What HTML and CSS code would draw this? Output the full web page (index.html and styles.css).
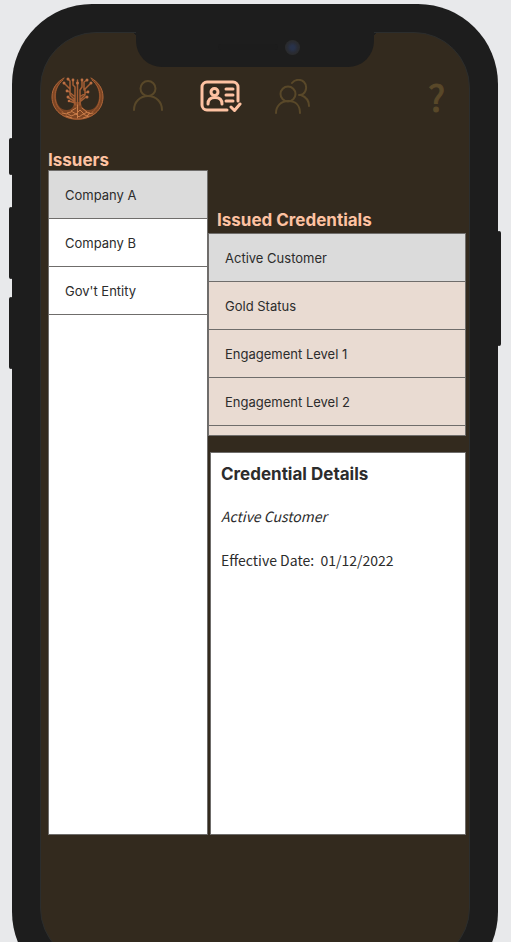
FILE: index.html
```html
<!DOCTYPE html>
<html lang="en">
<head>
<meta charset="utf-8">
<meta name="viewport" content="width=device-width, initial-scale=1">
<title>Credential Wallet</title>
<link rel="stylesheet" href="styles.css">
</head>
<body>
<div class="stage">
  <div class="phone">
    <span class="key key-mute"></span>
    <span class="key key-up"></span>
    <span class="key key-down"></span>
    <span class="key key-power"></span>
    <div class="notch"><span class="speaker"></span><span class="camera"></span></div>
    <div class="screen">
      <nav class="toolbar" aria-label="Main">
        <button class="tool tool-logo" type="button" aria-label="Home">
          <svg width="60" height="50" viewBox="0 0 60 50" fill="none" stroke-linecap="round" stroke-linejoin="round">
            <path d="M17 5C9 8 4 15 4 24c0 13 11 23 25.500 23S55 37 55 24c0-9-5-16-13-19 6 5 9 11 9 18 0 8-4 14-11 14-4 0-7-3-7-8h-7c0 5-3 8-7 8-7 0-11-6-11-14 0-7 3-13 9-18z" fill="#7d4523"/>
            <path d="M16 5C9 9 4 15 4 24c0 13 11 22 25.500 22S55 37 55 24c0-9-5-15-12-19" stroke="#b1673a" stroke-width="1"/>
            <path d="M15 7c-5 4-8 10-8 16 0 7 3 13 8 16M44 7c5 4 8 10 8 16 0 7-3 13-8 16" stroke="#a35d33" stroke-width="1"/>
            <path d="M29.500 33V7M27 32V14l-2-2V8M32 32V17l2-3V8M27 27l-5-5v-6l-5-5M22 19V8l-2-2M32 27l5-5v-6l5-5M36 17V9l3-2M26 28l-5-3M33 28l5-4M26 23l-6-5M33 23l6-4M27 30l-6-2" stroke="#a65f35" stroke-width="1.500"/>
            <g fill="#bd7044"><circle cx="16" cy="10" r="1.500"/><circle cx="20" cy="6" r="1.500"/><circle cx="25" cy="7" r="1.400"/><circle cx="29.500" cy="10" r="1.500"/><circle cx="34" cy="7" r="1.400"/><circle cx="39" cy="7" r="1.500"/><circle cx="43" cy="10" r="1.500"/><circle cx="19" cy="18" r="1.400"/><circle cx="40" cy="19" r="1.400"/><circle cx="20" cy="24" r="1.500"/><circle cx="39" cy="24" r="1.500"/><circle cx="21" cy="28" r="1.300"/></g>
            <path d="M29.500 32v13M28 35l-5 3 5 3 4-4 4 4 3-2-5-4M23 39l-4 1 4 3 5-2 3 3 4-3 4 2 3-3-4-1M14 40l5 1M45 40l-5 1M18 43l6 2M41 43l-6 2" stroke="#c97d49" stroke-width="1"/>
          </svg>
        </button>
        <button class="tool tool-profile" type="button" aria-label="Profile">
          <svg width="32" height="34" viewBox="0 0 32 34" fill="none" stroke="#594829" stroke-width="2" stroke-linecap="round"><circle cx="16" cy="9.500" r="7.500"/><path d="M2 31c0-8 6-14 14-14s14 6 14 14"/></svg>
        </button>
        <button class="tool tool-credentials" type="button" aria-label="Credentials" aria-current="page">
          <svg width="42" height="34" viewBox="0 0 42 34" fill="none" stroke="#fec2a2" stroke-width="3" stroke-linecap="round" stroke-linejoin="round"><path d="M27 30H7a5 5 0 0 1-5-5V7a5 5 0 0 1 5-5h26a5 5 0 0 1 5 5v14"/><circle cx="14.500" cy="12" r="3.500"/><path d="M8 24c0-4.500 3-6.500 7-6.500s7 2 7 6.500M26 9h7M26 15h7M26 21h7"/><path d="m31 27 3.500 3.500L40 24"/></svg>
        </button>
        <button class="tool tool-contacts" type="button" aria-label="Contacts">
          <svg width="36" height="36" viewBox="0 0 36 36" fill="none" stroke="#594829" stroke-width="2" stroke-linecap="round"><circle cx="13" cy="15" r="7.500"/><path d="M1 34c0-7 5-12 12.500-12S25 27 25 34M17 4c3-4 9-4 12-1s3 9-1 12c-1 1-3 1-4 1M26 16c5 2 8 6 8 11"/></svg>
        </button>
        <button class="tool tool-help" type="button" aria-label="Help">?</button>
      </nav>
      <main class="board">
        <section class="issuers">
          <h2 class="title">Issuers</h2>
          <ul class="list list-issuers">
            <li><button class="row row-active" type="button">Company A</button></li>
            <li><button class="row" type="button">Company B</button></li>
            <li><button class="row" type="button">Gov't Entity</button></li>
          </ul>
        </section>
        <div class="side">
          <section class="credentials">
            <h2 class="title title-inset">Issued Credentials</h2>
            <ul class="list list-credentials">
              <li><button class="row row-active" type="button">Active Customer</button></li>
              <li><button class="row" type="button">Gold Status</button></li>
              <li><button class="row" type="button">Engagement Level 1</button></li>
              <li><button class="row" type="button">Engagement Level 2</button></li>
            </ul>
          </section>
          <section class="details">
            <h2 class="details-title">Credential Details</h2>
            <p class="details-name">Active Customer</p>
            <p class="details-date">Effective Date:&nbsp; 01/12/2022</p>
          </section>
        </div>
      </main>
    </div>
  </div>
</div>
</body>
</html>
```
FILE: styles.css
```css
* { box-sizing: border-box; }
body { margin: 0; background: #e8e9eb; color: #2c2c2c; font-family: Inter, "Liberation Sans", sans-serif; }
h2, p, ul { margin: 0; padding: 0; }
ul { list-style: none; }
button { margin: 0; padding: 0; border: 0; background: none; color: inherit; font: inherit; cursor: pointer; }

.stage { height: 100vh; overflow: hidden; padding: 4px 13px 0 12px; }
.phone { position: relative; padding: 28px; border-radius: 80px; background: #1d1d1d; }
.screen { padding: 40px 3px 128px 7px; border: 1px solid #2b2d2d; border-radius: 56px; background: #332a1e; }

.key { position: absolute; width: 4px; background: #1d1d1d; border-radius: 2px; }
.key-mute { left: -3px; top: 134px; height: 37px; }
.key-up { left: -3px; top: 203px; height: 72px; }
.key-down { left: -3px; top: 293px; height: 72px; }
.key-power { right: -3px; top: 227px; height: 115px; }

.notch { position: absolute; top: 28px; left: 0; right: 0; width: 238px; height: 35px; margin: 0 auto; border-radius: 0 0 26px 26px; background: #1d1d1d; }
.notch::before, .notch::after { content: ""; position: absolute; top: 1px; width: 4px; height: 4px; }
.notch::before { left: -4px; background: radial-gradient(circle at 0 100%, transparent 4px, #1d1d1d 4px); }
.notch::after { right: -4px; background: radial-gradient(circle at 100% 100%, transparent 4px, #1d1d1d 4px); }
.speaker { position: absolute; left: 82px; top: 12px; width: 60px; height: 6px; border-radius: 3px; background: #1c1c1c; }
.camera { position: absolute; left: 149px; top: 8px; width: 15px; height: 15px; border-radius: 50%; background: radial-gradient(circle, #28324a 0 2px, #292c35 5px, #2a2b2d 7px); }

.toolbar { display: flex; align-items: flex-start; height: 77px; }
.tool { flex: none; display: block; }
.tool svg { display: block; }
.tool-profile { margin: 6px 0 0 24px; }
.tool-credentials { margin: 7px 0 0 36px; }
.tool-contacts { margin: 6px 0 0 33px; }
.tool-help { margin: 0 21px 0 auto; color: #594829; font: 400 36px/46px "Noto Sans CJK SC", sans-serif; -webkit-text-stroke: 1px #594829; }

.board { display: grid; grid-template-columns: 160fr 258fr; min-height: 685px; }
.issuers, .side { display: flex; flex-direction: column; min-width: 0; }
.title { color: #fec2a2; font-size: 17px; line-height: 20px; font-weight: 700; }
.title-inset { padding-left: 9px; }
.list { border: 1px solid #6f6d6b; }
.list-issuers { flex: 1; background: #fff; }
.list-credentials { height: 203px; margin-top: 3px; overflow: hidden; background: #e9dbd2; }
.row { display: block; width: 100%; height: 48px; padding: 0 16px; border-bottom: 1px solid #6f6d6b; text-align: left; font-size: 13px; line-height: 20px; }
.row-active { background: #dbdbdb; }
.side { padding-top: 60px; gap: 16px; }
.details { flex: 1; margin-left: 2px; padding: 10px; border: 1px solid #6f6d6b; background: #fff; font: 14px/22px "Noto Sans CJK SC", sans-serif; }
.details-title { font: 700 17px/22px Inter, "Liberation Sans", sans-serif; }
.details-name { margin-top: 20px; font-style: italic; }
.details-date { margin-top: 22px; }
```
